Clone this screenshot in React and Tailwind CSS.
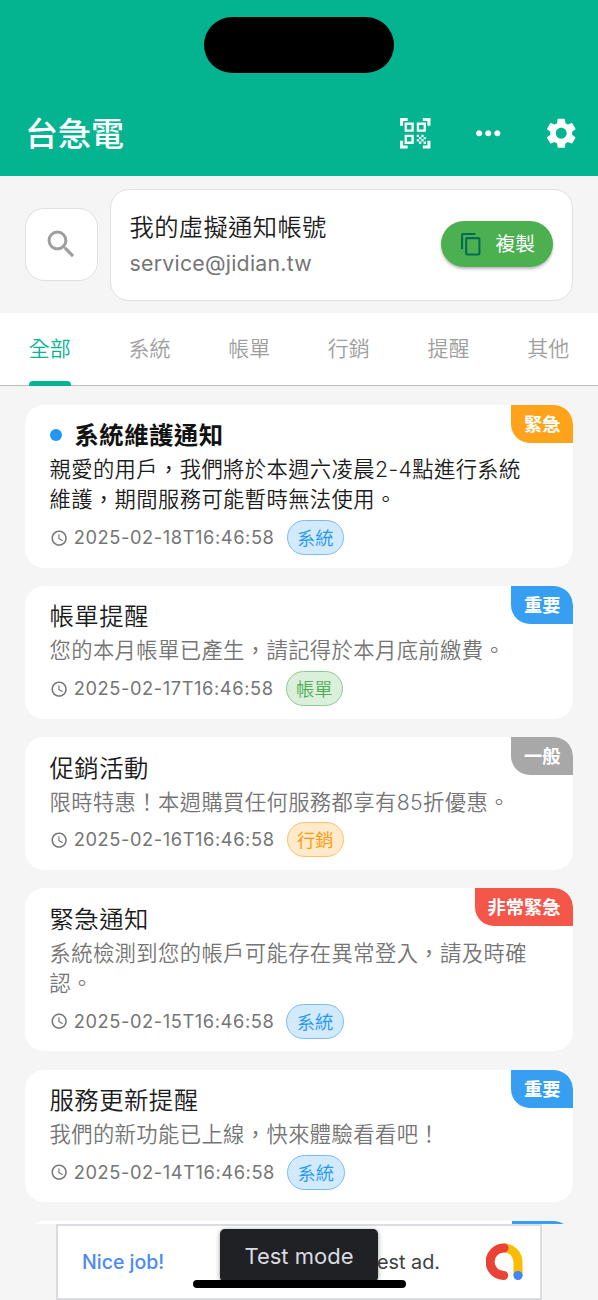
import React, { useState } from "react";
import {
  MdAccessTime,
  MdContentCopy,
  MdMoreHoriz,
  MdQrCodeScanner,
  MdSearch,
  MdSettings,
} from "react-icons/md";

const tabs = ["全部", "系統", "帳單", "行銷", "提醒", "其他"];

const tagStyles = {
  系統: "bg-[#d3eafd] border-[#78bdf8] text-[#2196f3]",
  帳單: "bg-[#dbefdc] border-[#8dcc90] text-[#4caf50]",
  行銷: "bg-[#ffeacc] border-[#ffc166] text-[#ff9800]",
};

const levelStyles = {
  緊急: "bg-[#ffa31a]",
  重要: "bg-[#379ff2]",
  一般: "bg-[#a8a8a8]",
  非常緊急: "bg-[#f5564a]",
};

const notifications = [
  {
    id: 1,
    title: "系統維護通知",
    content: "親愛的用戶，我們將於本週六凌晨2-4點進行系統維護，期間服務可能暫時無法使用。",
    time: "2025-02-18T16:46:58",
    tag: "系統",
    level: "緊急",
    unread: true,
  },
  {
    id: 2,
    title: "帳單提醒",
    content: "您的本月帳單已產生，請記得於本月底前繳費。",
    time: "2025-02-17T16:46:58",
    tag: "帳單",
    level: "重要",
  },
  {
    id: 3,
    title: "促銷活動",
    content: "限時特惠！本週購買任何服務都享有85折優惠。",
    time: "2025-02-16T16:46:58",
    tag: "行銷",
    level: "一般",
  },
  {
    id: 4,
    title: "緊急通知",
    content: "系統檢測到您的帳戶可能存在異常登入，請及時確認。",
    time: "2025-02-15T16:46:58",
    tag: "系統",
    level: "非常緊急",
  },
  {
    id: 5,
    title: "服務更新提醒",
    content: "我們的新功能已上線，快來體驗看看吧！",
    time: "2025-02-14T16:46:58",
    tag: "系統",
    level: "重要",
  },
];

const Header = () => (
  <header className="h-[176px] shrink-0 bg-[#04b38f] flex flex-col text-white">
    <div className="mt-[17px] mx-auto w-[190px] h-[56px] rounded-full bg-black" />
    <div className="mt-[17px] h-[86px] pl-[25px] pr-[19px] flex items-center justify-between">
      <h1 className="pt-[2px] text-[33px] leading-none font-medium">台急電</h1>
      <div className="flex items-center gap-[36.5px]">
        <MdQrCodeScanner size={36.5} />
        <MdMoreHoriz size={36.5} />
        <MdSettings size={36.5} />
      </div>
    </div>
  </header>
);

const Account = () => (
  <section className="h-[137px] shrink-0 px-[25px] flex items-center">
    <button className="w-[72.5px] h-[72.5px] shrink-0 rounded-[19px] border border-[#e0e0e0] bg-white flex items-center justify-center text-[#9e9e9e]">
      <MdSearch size={36.5} />
    </button>
    <div className="ml-3 flex-1 h-[112px] rounded-[19px] border border-[#e0e0e0] bg-white px-[19px] flex items-center justify-between">
      <div>
        <p className="text-[24.3px] leading-[36px] tracking-[0.35px] font-[350] text-[#1c1c1c]">
          我的虛擬通知帳號
        </p>
        <p className="text-[21.3px] leading-[36px] tracking-[0.25px] text-[#757575]">
          service@jidian.tw
        </p>
      </div>
      <button className="w-[112px] h-[46px] -mt-[1px] rounded-full bg-[#4caf50] shadow-[0_2px_3px_rgba(0,0,0,0.28)] flex items-center pl-[18px] text-white text-[19.8px]">
        <MdContentCopy size={24.5} className="text-[#026c55]" />
        <span className="ml-[12px] pt-[2px] leading-none">複製</span>
      </button>
    </div>
  </section>
);

const Tabs = () => {
  const [active, setActive] = useState("全部");

  return (
    <nav className="h-[72.5px] shrink-0 bg-white border-b border-[#bdbdbd] grid grid-cols-6">
      {tabs.map((tab) => (
        <button
          key={tab}
          onClick={() => setActive(tab)}
          className={`flex flex-col items-center justify-between text-[21px] ${
            active === tab ? "text-[#04b38f]" : "text-[#9e9e9e]"
          }`}
        >
          <span className="leading-[72px] h-[67px] font-[350]">{tab}</span>
          {active === tab && (
            <span className="w-[42px] h-[5px] -mb-px rounded-t-[4px] bg-[#04b38f]" />
          )}
        </button>
      ))}
    </nav>
  );
};

const LevelBadge = ({ level }) => (
  <span
    className={`absolute top-0 right-0 h-[38px] px-[12.5px] rounded-bl-[19px] rounded-tr-[19px] text-white text-[18.3px] leading-[39px] font-bold ${levelStyles[level]}`}
  >
    {level}
  </span>
);

const NotificationCard = ({ item }) => (
  <article className="relative shrink-0 rounded-[19px] bg-white overflow-hidden pl-[25px] pr-[40px] pt-[12.5px] pb-[12.4px]">
    <LevelBadge level={item.level} />
    <h2
      className={`flex items-center text-[24.4px] leading-[37px] tracking-[0.45px] ${
        item.unread ? "font-bold text-[#121212]" : "font-[350] text-[#1c1c1c]"
      }`}
    >
      {item.unread && (
        <i className="w-3 h-3 mr-[13px] -mt-[2px] rounded-full bg-[#2196f3]" />
      )}
      {item.title}
    </h2>
    <p
      className={`text-[21.3px] leading-[30.4px] tracking-[0.4px] font-[350] ${
        item.unread ? "text-[#1c1c1c]" : "text-[#757575]"
      }`}
    >
      {item.content}
    </p>
    <div className="mt-[5.4px] h-[35px] flex items-center text-[18.3px] text-[#757575]">
      <MdAccessTime size={18.3} />
      <time className="ml-[6px] tracking-[0.57px]">{item.time}</time>
      <span
        className={`ml-3 h-[35px] px-[9.5px] rounded-full border-[1.5px] leading-[34px] font-[350] ${tagStyles[item.tag]}`}
      >
        {item.tag}
      </span>
    </div>
  </article>
);

const AdBanner = () => (
  <footer className="relative h-[76px] shrink-0 mx-auto w-[486px] bg-white border-2 border-[#dadce0] flex items-center justify-between pl-6 pr-4">
    <span className="pt-[1px] text-[19.5px] font-medium text-[#4a8af4]">
      Nice job!
    </span>
    <div className="flex items-center">
      <span className="pt-[1px] text-[19.8px] text-[#3c4043] mr-[46px]">
        est ad.
      </span>
      <svg width="38" height="38" viewBox="0 0 38 38" fill="none">
        <path
          d="M18 5A14 14 0 0 1 32 19v13.5"
          stroke="#fbbc04"
          strokeWidth="9"
        />
        <path
          d="M18 5A13.75 13.75 0 0 0 17.7 32.5"
          stroke="#ea4335"
          strokeWidth="9"
          strokeLinecap="round"
        />
        <circle cx="32" cy="32.5" r="4.6" fill="#4285f4" />
      </svg>
    </div>
    {/* toast and home indicator float over the banner */}
    <div className="absolute left-[162px] top-[3px] w-[158px] h-[53px] rounded-[5px] bg-[#202124] shadow-[0_1px_5px_rgba(0,0,0,0.4)] text-center text-[22px] leading-[54px] text-[#dadce0]">
      Test mode
    </div>
    <div className="absolute left-[135px] top-[54px] w-[213px] h-[7.5px] rounded-full bg-black" />
  </footer>
);

const App = () => {
  return (
    <div className="w-[598px] h-[1300px] overflow-hidden bg-[#f5f5f5] flex flex-col font-['Inter','Noto_Sans_CJK_TC',sans-serif]">
      <Header />
      <Account />
      <Tabs />
      <main className="flex-1 min-h-0 overflow-hidden pl-[24.5px] pr-[25px] pt-[19px] flex flex-col gap-[18.4px]">
        {notifications.map((item) => (
          <NotificationCard key={item.id} item={item} />
        ))}
        {/* next card, only its top edge peeks out above the banner */}
        <article className="shrink-0 h-[132.7px] rounded-[19px] bg-white overflow-hidden flex justify-end">
          <div className="w-[61.5px] h-[38px] rounded-bl-[19px] rounded-tr-[19px] bg-[#379ff2]" />
        </article>
      </main>
      <AdBanner />
    </div>
  );
};

export default App;
